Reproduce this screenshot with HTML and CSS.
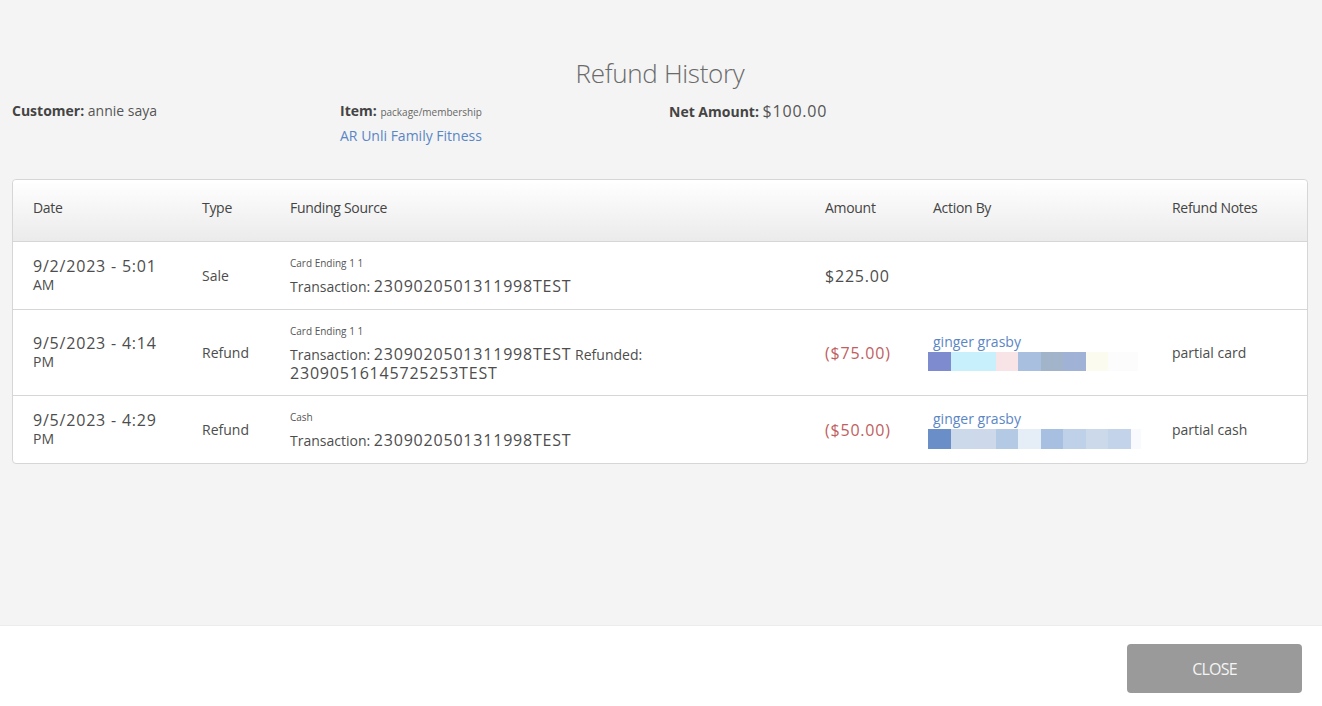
FILE: index.html
```html
<!DOCTYPE html>
<html>
<head>
    <title>Refund History</title>
    <meta name="viewport" content="width=device-width,initial-scale=1">
    <link rel="stylesheet" href="styles.css">
</head>
<body>
<div class="modal">
    <div class="modal-body">
        <h1 class="title">Refund History</h1>

        <!-- 고객 / 상품 / 금액 -->
        <div class="info">
            <div><b>Customer:</b> annie saya</div>
            <div>
                <b>Item:</b> <span class="small">package/membership</span>
                <div class="item-link"><a href="#">AR Unli Family Fitness</a></div>
            </div>
            <div><b>Net Amount:</b> <span class="num">$100.00</span></div>
        </div>

        <table class="history">
            <colgroup>
                <col class="c-date">
                <col class="c-type">
                <col class="c-source">
                <col class="c-amount">
                <col class="c-action">
                <col class="c-notes">
            </colgroup>
            <thead>
                <tr>
                    <th>Date</th>
                    <th>Type</th>
                    <th>Funding Source</th>
                    <th>Amount</th>
                    <th>Action By</th>
                    <th>Refund Notes</th>
                </tr>
            </thead>
            <tbody>
                <tr class="row-short">
                    <td class="date"><span class="num">9/2/2023 - 5:01</span><br>AM</td>
                    <td>Sale</td>
                    <td>
                        <div class="source">Card Ending 1 1</div>
                        <div class="trans">Transaction: <span class="num">2309020501311998TEST</span></div>
                    </td>
                    <td><span class="num">$225.00</span></td>
                    <td></td>
                    <td></td>
                </tr>
                <tr class="row-tall">
                    <td class="date"><span class="num">9/5/2023 - 4:14</span><br>PM</td>
                    <td>Refund</td>
                    <td>
                        <div class="source">Card Ending 1 1</div>
                        <div class="trans">Transaction: <span class="num">2309020501311998TEST</span> Refunded:<br><span class="num">23090516145725253TEST</span></div>
                    </td>
                    <td><span class="num neg">($75.00)</span></td>
                    <td>
                        <a class="who" href="#">ginger grasby</a>
                        <div class="mosaic mosaic-a"><span></span><span></span><span></span><span></span><span></span><span></span><span></span><span></span><span></span></div>
                    </td>
                    <td>partial card</td>
                </tr>
                <tr class="row-short">
                    <td class="date"><span class="num">9/5/2023 - 4:29</span><br>PM</td>
                    <td>Refund</td>
                    <td>
                        <div class="source">Cash</div>
                        <div class="trans">Transaction: <span class="num">2309020501311998TEST</span></div>
                    </td>
                    <td><span class="num neg">($50.00)</span></td>
                    <td>
                        <a class="who" href="#">ginger grasby</a>
                        <div class="mosaic mosaic-b"><span></span><span></span><span></span><span></span><span></span><span></span><span></span><span></span><span></span><span></span></div>
                    </td>
                    <td>partial cash</td>
                </tr>
            </tbody>
        </table>
    </div>

    <div class="modal-footer">
        <button class="btn-close">CLOSE</button>
    </div>
</div>
</body>
</html>
```

FILE: styles.css
```css
body {
    margin: 0;
    font-family: "Open Sans", "Liberation Sans", sans-serif;
    font-size: 14px;
    color: #4d4d4d;
    background: #ffffff;
}

a {
    color: #5a86c5;
    text-decoration: none;
}

.modal-body {
    /* 회색 본문 영역 */
    background: #f4f4f4;
    height: 625px;
    box-sizing: border-box;
    padding: 56px 14px 0 12px;
}

.title {
    margin: 0;
    text-align: center;
    font-size: 26px;
    font-weight: 300;
    line-height: 34px;
    color: #6a6a6a;
    letter-spacing: -0.3px;
}

.info {
    display: grid;
    grid-template-columns: 328px 329px 1fr;
    margin-top: 10px;
    line-height: 22px;
    color: #555;
}

.info b {
    font-weight: 700;
    color: #444;
}

.small {
    font-size: 10px;
    color: #666;
}

.item-link {
    margin-top: 2px;
}

.num {
    font-size: 16px;
    letter-spacing: 0.8px;
}

.history {
    width: 1296px;
    margin-top: 32px;
    border: 1px solid #d6d6d6;
    border-radius: 4px;
    border-spacing: 0;
    table-layout: fixed;
    background: #ffffff;
}

.c-date { width: 169px; }
.c-type { width: 88px; }
.c-source { width: 535px; }
.c-amount { width: 108px; }
.c-action { width: 239px; }
.c-notes { width: 155px; }

.history th {
    height: 55px;
    padding: 0 0 6px 20px;
    text-align: left;
    font-weight: 400;
    color: #444;
    background: linear-gradient(#ffffff, #ebebeb);
    letter-spacing: -0.3px;
}

.history thead th:first-child { border-top-left-radius: 4px; }
.history thead th:last-child { border-top-right-radius: 4px; }

.history td {
    padding: 0 0 0 20px;
    border-top: 1px solid #d6d6d6;
    vertical-align: middle;
    color: #4d4d4d;
}

.row-short td { height: 67px; }
.row-tall td { height: 85px; }

.date {
    line-height: 18px;
}

.source {
    font-size: 10px;
    line-height: 16px;
    color: #555;
}

.trans {
    margin-top: 6px;
    line-height: 18px;
}

.neg {
    color: #c0605e;
}

.who {
    display: block;
    line-height: 16px;
}

/* 이름 가림 처리(모자이크) */
.mosaic {
    display: flex;
    margin: 2px 0 0 -5px;
    height: 19px;
}

.mosaic span {
    width: 22.5px;
    height: 100%;
}

.mosaic-a span:nth-child(1) { background: #7f8bcf; }
.mosaic-a span:nth-child(2) { background: #c7f0fc; }
.mosaic-a span:nth-child(3) { background: #c7f0fc; }
.mosaic-a span:nth-child(4) { background: #f8e3e6; }
.mosaic-a span:nth-child(5) { background: #a9bfdf; }
.mosaic-a span:nth-child(6) { background: #a2b4c9; }
.mosaic-a span:nth-child(7) { background: #a0b3d6; }
.mosaic-a span:nth-child(8) { background: #fcfbef; }
.mosaic-a span:nth-child(9) { background: #fdfcfd; width: 30px; }

.mosaic-b { height: 20px; }
.mosaic-b span:nth-child(1) { background: #6a8fc8; }
.mosaic-b span:nth-child(2) { background: #cbd9eb; }
.mosaic-b span:nth-child(3) { background: #cdd9eb; }
.mosaic-b span:nth-child(4) { background: #b4c9e3; }
.mosaic-b span:nth-child(5) { background: #e5edf6; }
.mosaic-b span:nth-child(6) { background: #a7bfe0; }
.mosaic-b span:nth-child(7) { background: #bfd1e8; }
.mosaic-b span:nth-child(8) { background: #cbd9eb; }
.mosaic-b span:nth-child(9) { background: #c3d4ea; }
.mosaic-b span:nth-child(10) { background: #f8fafd; width: 10px; }

.modal-footer {
    display: flex;
    justify-content: flex-end;
    padding: 18px 20px 0 0;
    border-top: 1px solid #ececec;
}

.btn-close {
    width: 175px;
    height: 49px;
    border: none;
    border-radius: 4px;
    background: #9a9a9a;
    color: #f4f4f4;
    font-family: "Open Sans", "Liberation Sans", sans-serif;
    font-size: 16px;
    letter-spacing: -0.8px;
}
```
